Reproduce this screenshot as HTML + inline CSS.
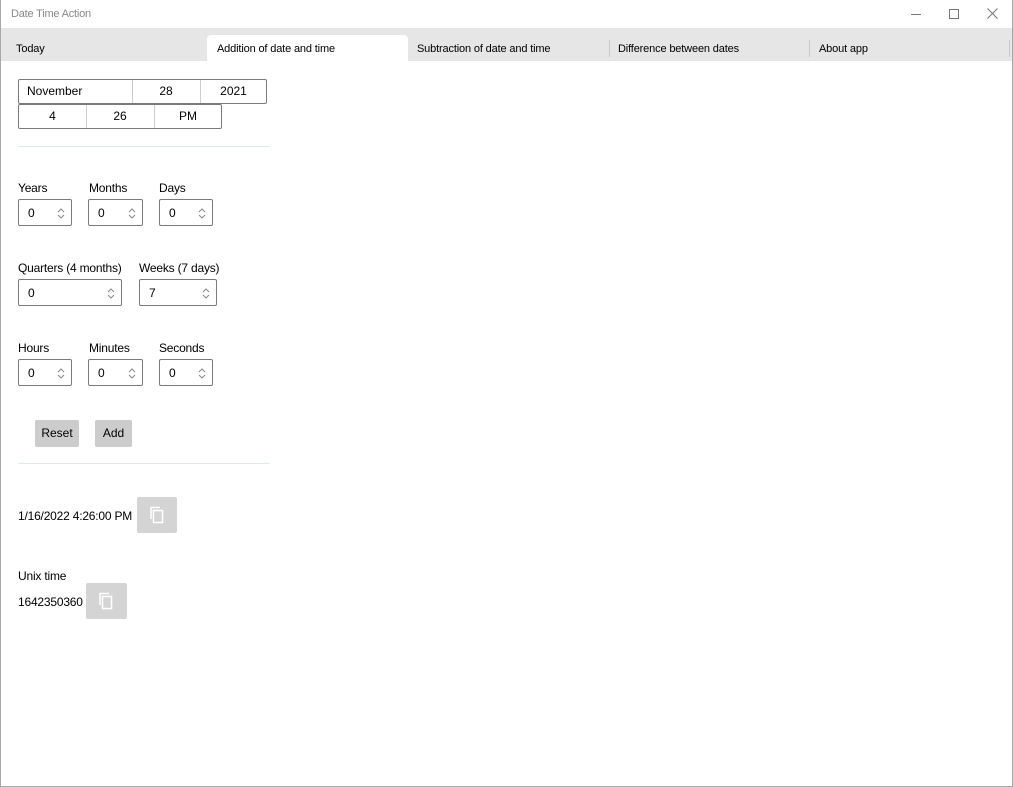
<!DOCTYPE html>
<html><head><style>
*{box-sizing:border-box;margin:0;padding:0}
body{width:1013px;height:787px;background:#fff;font-family:"Liberation Sans",sans-serif;color:#000;position:relative;overflow:hidden}
.a{position:absolute}
.win{left:0;top:0;width:1013px;height:787px;border:1px solid #a8a8a8;border-top:none}
.t{font-size:12px;white-space:nowrap;letter-spacing:-0.2px}
.tab{top:28px;height:33px;font-size:11px;line-height:42px;letter-spacing:-0.15px}
.sep{top:40px;width:1px;height:17px;background:#c8c8c8}
.box{border:1px solid #7a7a7a;border-radius:2px;background:#fff}
.cell{position:absolute;top:0;height:100%;font-size:12px;text-align:center;line-height:22px}
.div{position:absolute;top:0;width:1px;height:100%;background:#ccc}
.spin{border:1px solid #7a7a7a;border-radius:2px;height:27px}
.spin span{position:absolute;left:9px;top:6px;font-size:12px}
.spin svg{position:absolute;right:6px;top:8px}
.btn{background:#ccc;border-radius:2px;font-size:12px;text-align:center;line-height:26px;height:27px}
.hl{height:1px;background:#dfe7f1;left:18px;width:252px}
.cp{background:#d4d4d4;border-radius:2px}
</style></head><body>
<div class="a win"></div>
<div class="a t" style="left:11px;top:8px;font-size:11px;color:#888">Date Time Action</div>
<div class="a" style="left:911px;top:14px;width:10px;height:1px;background:#777"></div>
<div class="a" style="left:949px;top:9px;width:10px;height:10px;border:1px solid #777"></div>
<svg class="a" style="left:987px;top:8px" width="11" height="11"><path d="M0.5 .5L10.5 10.5M10.5 .5L.5 10.5" stroke="#777"/></svg>
<div class="a" style="left:1px;top:28px;width:1011px;height:33px;background:#e6e6e6"></div>
<div class="a" style="left:207px;top:35px;width:201px;height:27px;background:#fff;border-radius:4px 4px 0 0"></div>
<div class="a tab" style="left:16px">Today</div>
<div class="a tab" style="left:217px">Addition of date and time</div>
<div class="a tab" style="left:417px">Subtraction of date and time</div>
<div class="a sep" style="left:609px"></div>
<div class="a tab" style="left:618px">Difference between dates</div>
<div class="a sep" style="left:809px"></div>
<div class="a tab" style="left:819px">About app</div>
<div class="a sep" style="left:1009px"></div>

<div class="a box" style="left:18px;top:79px;width:249px;height:25px">
<div class="cell" style="left:8px;text-align:left">November</div>
<div class="div" style="left:113px"></div><div class="cell" style="left:113px;width:68px">28</div>
<div class="div" style="left:181px"></div><div class="cell" style="left:181px;width:67px">2021</div>
</div>
<div class="a box" style="left:18px;top:104px;width:204px;height:25px">
<div class="cell" style="left:0;width:67px">4</div>
<div class="div" style="left:67px"></div><div class="cell" style="left:67px;width:68px">26</div>
<div class="div" style="left:135px"></div><div class="cell" style="left:135px;width:68px">PM</div>
</div>
<div class="a hl" style="top:146px"></div>

<div class="a t" style="left:18px;top:181px">Years</div>
<div class="a t" style="left:89px;top:181px">Months</div>
<div class="a t" style="left:159px;top:181px">Days</div>
<div class="a spin" style="left:18px;top:199px;width:54px"><span>0</span><svg width="8" height="11"><path d="M1 4L4 1L7 4M1 7L4 10L7 7" fill="none" stroke="#888"/></svg></div>
<div class="a spin" style="left:88px;top:199px;width:55px"><span>0</span><svg width="8" height="11"><path d="M1 4L4 1L7 4M1 7L4 10L7 7" fill="none" stroke="#888"/></svg></div>
<div class="a spin" style="left:159px;top:199px;width:54px"><span>0</span><svg width="8" height="11"><path d="M1 4L4 1L7 4M1 7L4 10L7 7" fill="none" stroke="#888"/></svg></div>

<div class="a t" style="left:18px;top:261px">Quarters (4 months)</div>
<div class="a t" style="left:139px;top:261px">Weeks (7 days)</div>
<div class="a spin" style="left:18px;top:279px;width:104px"><span>0</span><svg width="8" height="11"><path d="M1 4L4 1L7 4M1 7L4 10L7 7" fill="none" stroke="#888"/></svg></div>
<div class="a spin" style="left:139px;top:279px;width:78px"><span>7</span><svg width="8" height="11"><path d="M1 4L4 1L7 4M1 7L4 10L7 7" fill="none" stroke="#888"/></svg></div>

<div class="a t" style="left:18px;top:341px">Hours</div>
<div class="a t" style="left:89px;top:341px">Minutes</div>
<div class="a t" style="left:159px;top:341px">Seconds</div>
<div class="a spin" style="left:18px;top:359px;width:54px"><span>0</span><svg width="8" height="11"><path d="M1 4L4 1L7 4M1 7L4 10L7 7" fill="none" stroke="#888"/></svg></div>
<div class="a spin" style="left:88px;top:359px;width:55px"><span>0</span><svg width="8" height="11"><path d="M1 4L4 1L7 4M1 7L4 10L7 7" fill="none" stroke="#888"/></svg></div>
<div class="a spin" style="left:159px;top:359px;width:54px"><span>0</span><svg width="8" height="11"><path d="M1 4L4 1L7 4M1 7L4 10L7 7" fill="none" stroke="#888"/></svg></div>

<div class="a btn" style="left:35px;top:420px;width:44px">Reset</div>
<div class="a btn" style="left:95px;top:420px;width:37px">Add</div>
<div class="a hl" style="top:463px"></div>

<div class="a t" style="left:18px;top:509px">1/16/2022 4:26:00 PM</div>
<div class="a cp" style="left:137px;top:497px;width:40px;height:36px"><svg class="a" style="left:12px;top:9px" width="16" height="18"><path d="M2 13V1.5H11" fill="none" stroke="#fff" stroke-width="1.5"/><rect x="4.5" y="4.5" width="9" height="12" fill="none" stroke="#fff" stroke-width="1.5"/></svg></div>
<div class="a t" style="left:18px;top:569px">Unix time</div>
<div class="a t" style="left:18px;top:595px">1642350360</div>
<div class="a cp" style="left:86px;top:583px;width:41px;height:36px"><svg class="a" style="left:12px;top:9px" width="16" height="18"><path d="M2 13V1.5H11" fill="none" stroke="#fff" stroke-width="1.5"/><rect x="4.5" y="4.5" width="9" height="12" fill="none" stroke="#fff" stroke-width="1.5"/></svg></div>
</body></html>
